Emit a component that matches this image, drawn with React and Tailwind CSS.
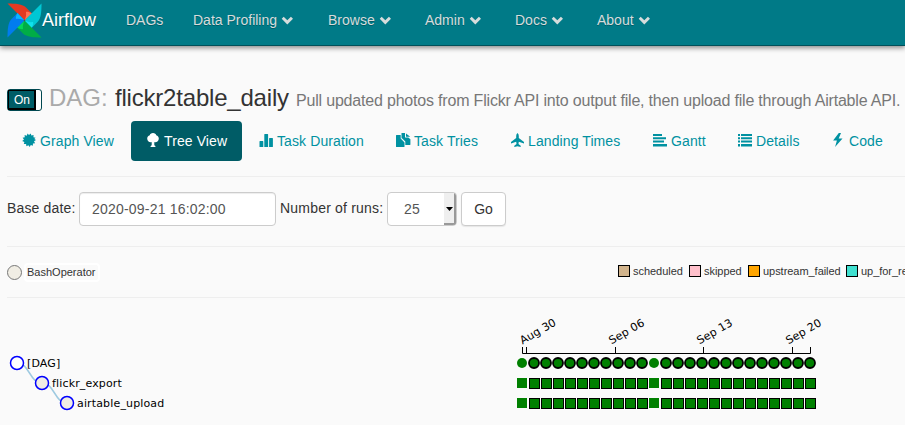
import React from 'react';

const icons = {
  certificate: (
    <polygon points="14,7 12,8.2 13.1,10.2 10.9,10.5 10.9,12.7 8.8,11.9 7.7,14 6.4,12.2 4.4,13.3 4.1,11.1 1.8,11.1 2.4,9 0.2,8.1 2,6.6 0.6,4.8 2.8,4.3 2.6,2 4.8,2.7 5.5,0.5 7,2 8.7,0.4 9.4,2.6 11.6,1.9 11.4,4.2 13.6,4.8 12.3,6.1" />
  ),
  tree: (
    <path d="M7 0C8.8 0 10 1 10.2 2.2C11.8 2.8 12.8 4 12.8 5.5C12.8 7.6 11.2 9.2 9.2 9.2C8.9 9.2 8.6 9.2 8.300 9V12.2L9.4 13V14H4.6V13L5.700 12.2V9C5.4 9.2 5.1 9.2 4.8 9.2C2.8 9.2 1.2 7.6 1.2 5.5C1.2 4 2.2 2.8 3.8 2.2C4 1 5.2 0 7 0Z" />
  ),
  stats: (
    <path d="M1 8h2.800q.5 0 .5.5V14H.500V8.5Q.5 8 1 8ZM5.800 1h2.800q.5 0 .5.5V14H5.300V1.500Q5.300 1 5.800 1ZM10.600 5h2.800q.5 0 .5.5V13.500q0 .5-.5.5H10.100V5.500Q10.100 5 10.600 5Z" />
  ),
  duplicate: (
    <path d="M.5 2H4.7V5.5L8.5 9.5V13.5Q8.5 14 8 14H.5Q0 14 0 13.5V2.5Q0 2 .5 2ZM5.5 0H9V4.5H12.3L14.4 6.3V11.6Q14.4 12 14 12H9.3V8.5L5.5 4.8ZM10 0.4L14.2 3.7H10ZM5.7 2L8 5.4H5.7Z" />
  ),
  plane: (
    <path d="M7.500 0Q8.8.8 8.8 3V5L14 9V10.5L8.8 8.7L8.500 11L10.7 12.8V14L7.500 13.2L4.3 14V12.8L6.500 11L6.2 8.7L1 10.5V9L6.2 5V3Q6.2.8 7.500 0Z" />
  ),
  align: (
    <path d="M0 1h9v2H0zM0 4.300h13v2H0zM0 7.6h11v2H0zM0 11h14v2.500H0z" />
  ),
  list: (
    <path d="M0 1h2v2H0zM3 1h11v2H3zM0 4.3h2v2H0zM3 4.3h11v2H3zM0 7.6h2v2H0zM3 7.6h11v2H3zM0 11h2v2.500H0zM3 11h11v2.500H3z" />
  ),
  flash: <path d="M7.8 0L2.1 7.6H5.9L4.1 14L11.5 5.6H7.700L10 0Z" />,
};

function Icon({ name }) {
  return (
    <svg width="15" height="14" viewBox="0 0 15 14" className="mr-[3px] mb-[2px] block shrink-0" fill="currentColor">
      {icons[name]}
    </svg>
  );
}

function Chevron() {
  return (
    <svg width="12" height="9" viewBox="0 0 12 9" className="ml-1 block shrink-0" fill="currentColor">
      <path d="M2.7.8L6.300 4.200L9.9.8L12 2.800L6.300 8.4L.7 2.800Z" />
    </svg>
  );
}

const menu = [
  { label: 'DAGs', width: 'w-[67px]' },
  { label: 'Data Profiling', width: 'w-[135px]', caret: true },
  { label: 'Browse', width: 'w-[97px]', caret: true },
  { label: 'Admin', width: 'w-[90px]', caret: true },
  { label: 'Docs', width: 'w-[82px]', caret: true },
  { label: 'About', width: 'w-[80px]', caret: true },
];

const tabs = [
  { label: 'Graph View', icon: 'certificate', width: 'w-[122px]' },
  { label: 'Tree View', icon: 'tree', width: 'w-[111px]', active: true },
  { label: 'Task Duration', icon: 'stats', width: 'w-[135px]' },
  { label: 'Task Tries', icon: 'duplicate', width: 'w-[112px]' },
  { label: 'Landing Times', icon: 'plane', width: 'w-[141px]' },
  { label: 'Gantt', icon: 'align', width: 'w-[83px]' },
  { label: 'Details', icon: 'list', width: 'w-[91px]' },
  { label: 'Code', icon: 'flash', width: 'w-[80px]' },
];

const states = [
  { label: 'scheduled', fill: 'bg-[#d2b48c]', width: 'w-[71px]' },
  { label: 'skipped', fill: 'bg-[#ffc0cb]', width: 'w-[59px]' },
  { label: 'upstream_failed', fill: 'bg-[#ffa500]', width: 'w-[98px]' },
  { label: 'up_for_reschedule', fill: 'bg-[#40e0d0]', width: 'w-[120px]' },
];

const nodes = [
  { label: '[DAG]', x: 17, y: 363, fill: '#fff' },
  { label: 'flickr_export', x: 42, y: 383, fill: '#f0ede4' },
  { label: 'airtable_upload', x: 67, y: 403, fill: '#f0ede4' },
];

const ticks = [
  { label: 'Aug 30', x: 522.5 },
  { label: 'Sep 06', x: 611.5 },
  { label: 'Sep 13', x: 699.5 },
  { label: 'Sep 20', x: 788.5 },
];

const runs = Array.from({ length: 25 }, (_, i) => ({ x: 522 + i * 12, scheduled: i !== 0 && i !== 11 }));

const blades = [
  { angle: 0, fill: '#e43921', fold: '#ff7557' },
  { angle: 90, fill: '#00c7d4', fold: '#11e1ee' },
  { angle: 180, fill: '#00ad46', fold: '#04d659' },
  { angle: 270, fill: '#017cee', fold: '#0cb6ff' },
];

function Logo() {
  return (
    <svg width="36" height="36" viewBox="0.5 0.5 36 36" className="block shrink-0">
      {blades.map((b) => (
        <g key={b.angle} transform={`rotate(${b.angle} 18 18)`}>
          <path d="M1 1C9 1 16 1.500 19.500 5L25.500 11L18 18Z" fill={b.fill} />
          <path d="M25.500 11C23 9.500 20.500 9 19.500 9.500C20 13 19 16 18 18Z" fill={b.fold} />
        </g>
      ))}
      <circle cx="18" cy="18" r="0.8" fill="#51504f" />
    </svg>
  );
}

export default function App() {
  return (
    <div className="h-[425px] w-[905px] overflow-hidden bg-[#fafafa] font-['Liberation_Sans',Arial,sans-serif] text-[14px] leading-5 text-[#333]">
      <nav className="flex h-[46px] border-b border-[#00505a] bg-[#007a87] pl-[7px] text-[#d6dcdc] shadow-[0_2px_5px_rgba(0,0,0,0.45)] [text-shadow:0_1px_0_rgba(0,0,0,0.25)]">
        <div className="flex w-[119px] items-start pt-[3px]">
          <Logo />
          <span className="mt-[7px] -ml-px text-[18px] text-white">Airflow</span>
        </div>
        {menu.map((m) => (
          <div key={m.label} className={`flex h-[40px] shrink-0 items-center whitespace-nowrap ${m.width}`}>
            {m.label}
            {m.caret && <Chevron />}
          </div>
        ))}
      </nav>

      <main className="pl-[7px]">
        <header className="flex h-[75px] items-start whitespace-nowrap pt-[38px]">
          <div className="mt-[5px] flex h-[22px] w-[35px] shrink-0 rounded-[3px] border border-[#004850] bg-white">
            <span className="w-[28px] border-2 border-t border-l border-black bg-[#005c66] pl-[5px] text-[12px] leading-[19px] text-white">On</span>
          </div>
          <h3 className="ml-[7px] flex items-baseline text-[24px] leading-[28px]">
            <span className="w-[66px] text-[#aaa]">DAG:</span>
            <span className="w-[181px] tracking-[-0.2px]">flickr2table_daily</span>
            <span className="text-[16px] tracking-[-0.19px] text-[#777]">
              Pull updated photos from Flickr API into output file, then upload file through Airtable API.
            </span>
          </h3>
        </header>

        <div className="flex h-[40px] gap-[2px] tracking-[0.1px]">
          {tabs.map((t) => (
            <div
              key={t.label}
              className={`flex h-[40px] shrink-0 items-center whitespace-nowrap rounded-[4px] pl-[15px] ${t.width} ${t.active ? 'bg-[#005c66] text-white' : 'text-[#0091a1]'}`}
            >
              <Icon name={t.icon} />
              {t.label}
            </div>
          ))}
        </div>

        <form className="mt-[15px] flex h-[71px] items-start border-y border-[#eee] pt-[15px]">
          <label className="w-[72px] shrink-0 pt-[6px] tracking-[0.16px]">Base date:</label>
          <div className="h-[34px] w-[197px] shrink-0 rounded-[4px] border border-[#ccc] bg-white pt-[6px] pl-[12px] tracking-[0.2px] text-[#555] shadow-[inset_0_1px_1px_rgba(0,0,0,0.075)]">
            2020-09-21 16:02:00
          </div>
          <label className="ml-[4px] w-[107px] shrink-0 pt-[6px] tracking-[0.2px]">Number of runs:</label>
          <div className="flex h-[34px] w-[70px] shrink-0 overflow-hidden rounded-[4px] border border-[#ccc] bg-white text-[#555]">
            <span className="w-[56px] pt-[6px] pl-[16px] tracking-[0.2px]">25</span>
            <span className="flex flex-1 items-center justify-center border-r-2 border-b-2 border-[#999] bg-[#efefef] pt-[2px]">
              <svg width="7" height="4" viewBox="0 0 7 4">
                <path d="M0 0H7L3.500 4Z" fill="#000" />
              </svg>
            </span>
          </div>
          <div className="ml-[4px] h-[34px] w-[45px] shrink-0 rounded-[4px] border border-[#ccc] bg-white pt-[6px] text-center shadow-[0_1px_1px_rgba(0,0,0,0.08)]">
            Go
          </div>
        </form>

        <div className="flex h-[51px] items-center justify-between border-b border-[#eee] text-[11px]">
          <div className="flex items-center">
            <span className="h-[15px] w-[15px] rounded-full border border-[#777] bg-[#f0ede4]" />
            <span className="ml-[2px] h-[19px] rounded-[4px] border-2 border-white pr-[3px] pl-[1px] leading-[15px]">BashOperator</span>
          </div>
          <div className="flex w-[287px] overflow-hidden pb-[3px] tracking-[-0.04px]">
            {states.map((s) => (
              <div key={s.label} className={`flex shrink-0 items-center whitespace-nowrap ${s.width}`}>
                <span className={`mr-[3px] h-[12px] w-[12px] shrink-0 border border-black ${s.fill}`} />
                {s.label}
              </div>
            ))}
          </div>
        </div>
      </main>

      <svg width="905" height="127" viewBox="0 298 905 127" className="block font-['DejaVu_Sans',sans-serif] text-[11px]">
        <path d="M17 363C29.500 363 29.500 383 42 383M42 383C54.500 383 54.500 403 67 403" fill="none" stroke="#9ecae1" strokeWidth="1.5" />
        {nodes.map((n) => (
          <g key={n.label}>
            <circle cx={n.x} cy={n.y} r="6.5" fill={n.fill} stroke="#00f" strokeWidth="1.5" />
            <text x={n.x + 10} y={n.y + 4} className="tracking-[0.15px]">{n.label}</text>
          </g>
        ))}
        <path d="M522.500 347V353.500H810.500V347M526.500 347V353M615.500 347V353M703.500 347V353M792.500 347V353" fill="none" stroke="#000" />
        {ticks.map((t) => (
          <text key={t.label} transform={`translate(${t.x} 344.5) rotate(-30)`} className="tracking-[0.15px]">{t.label}</text>
        ))}
        {runs.map((r) => (
          <g key={r.x} fill="#008000" stroke={r.scheduled ? '#000' : 'none'}>
            <circle cx={r.x} cy="363" r="5" strokeWidth="1.8" />
            {[378, 398].map((y) => (
              <rect key={y} x={r.scheduled ? r.x - 4.5 : r.x - 5} y={r.scheduled ? y + 0.5 : y} width="10" height="10" />
            ))}
          </g>
        ))}
      </svg>
    </div>
  );
}
